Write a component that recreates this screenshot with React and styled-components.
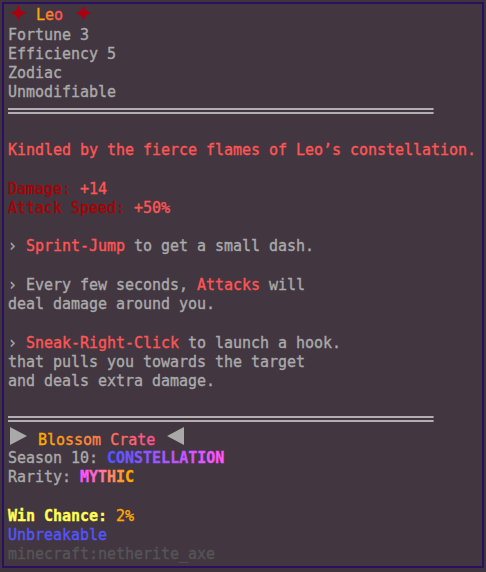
import React from "react";
import styled, { createGlobalStyle } from "styled-components";

const LH = 19.25;

const GlobalStyle = createGlobalStyle`
  html, body {
    margin: 0;
    padding: 0;
    background: #3d343d;
  }
  body {
    font-family: "DejaVu Sans Mono", "Liberation Mono", monospace;
  }
`;

const Tooltip = styled.div`
  box-sizing: border-box;
  margin: 2px;
  width: 482px;
  padding: 2px 4px 2px 4px;
  background: #423741;
  border: 2px solid #2c0f60;
  color: #aaaaaa;
  font-family: "DejaVu Sans Mono", "Liberation Mono", monospace;
  font-size: 15px;
  letter-spacing: -0.03px;
  -webkit-text-stroke: 0.35px currentColor;
`;

const Line = styled.div`
  box-sizing: border-box;
  height: ${LH}px;
  padding-top: 1.4px;
  line-height: ${LH - 1.4}px;
  white-space: pre;
  overflow: visible;
`;

const SepRow = styled.div`
  box-sizing: border-box;
  height: ${LH}px;
  padding-top: 5.8px;
  display: flex;
  flex-direction: column;
  gap: 2px;
`;

const Rule = styled.div`
  width: 425px;
  height: 1.8px;
  background: #b2aeb2;
  border-right: 1px solid #9c7c58;
`;

const Tx = styled.span`
  color: ${(p) => p.$c || "inherit"};
  font-weight: ${(p) => (p.$bold ? 700 : 400)};
`;

const Glyph = styled.svg`
  display: inline-block;
  vertical-align: ${(p) => p.$va ?? 0}px;
  margin-top: -4px;
  margin-left: ${(p) => p.$ml || 0}px;
  margin-right: ${(p) => p.$mr || 0}px;
`;

const hex = (h) => [1, 3, 5].map((i) => parseInt(h.slice(i, i + 2), 16));
const mix = (a, b, t) => {
  const A = hex(a);
  const B = hex(b);
  return `rgb(${A.map((v, i) => Math.round(v + (B[i] - v) * t)).join(",")})`;
};

function Gradient({ text, from, to, bold }) {
  const chars = [...text];
  const n = Math.max(chars.length - 1, 1);
  return (
    <Tx $bold={bold}>
      {chars.map((ch, i) => (
        <span key={i} style={{ color: mix(from, to, i / n) }}>
          {ch}
        </span>
      ))}
    </Tx>
  );
}

const Star = ({ ml, mr }) => (
  <Glyph width="17" height="16" viewBox="0 0 17 16" $ml={ml} $mr={mr} $va={-0.4}>
    <path
      d="M8.5 0 Q9.6 6.8 17 8 Q9.6 9.2 8.5 16 Q7.4 9.2 0 8 Q7.4 6.8 8.5 0Z"
      fill="#aa0010"
    />
  </Glyph>
);

const Triangle = ({ dir, ml, mr }) => (
  <Glyph width="17" height="18" viewBox="0 0 17 18" $ml={ml} $mr={mr} $va={0.4}>
    <path d={dir === "right" ? "M0 0 L17 9 L0 18Z" : "M17 0 L0 9 L17 18Z"} fill="#a9a9a9" />
  </Glyph>
);

const Separator = () => (
  <SepRow>
    <Rule />
    <Rule />
  </SepRow>
);

const RED = "#ff5555";
const DARK_RED = "#aa0000";

export default function App() {
  return (
    <>
      <GlobalStyle />
      <Tooltip>
        <Line>
          <Star ml={2} />
          {" "}
          <Gradient text="Leo" from="#ffaa00" to="#ff5555" />
          {" "}
          <Star ml={3} />
        </Line>
        <Line>Fortune 3</Line>
        <Line>Efficiency 5</Line>
        <Line>Zodiac</Line>
        <Line>Unmodifiable</Line>
        <Separator />
        <Line />
        <Line>
          <Tx $c={RED}>Kindled by the fierce flames of Leo’s constellation.</Tx>
        </Line>
        <Line />
        <Line>
          <Tx $c={DARK_RED}>Damage:</Tx> <Tx $c={RED}>+14</Tx>
        </Line>
        <Line>
          <Tx $c={DARK_RED}>Attack Speed:</Tx> <Tx $c={RED}>+50%</Tx>
        </Line>
        <Line />
        <Line>
          › <Tx $c={RED}>Sprint-Jump</Tx> to get a small dash.
        </Line>
        <Line />
        <Line>
          › Every few seconds, <Tx $c={RED}>Attacks</Tx> will
        </Line>
        <Line>deal damage around you.</Line>
        <Line />
        <Line>
          › <Tx $c={RED}>Sneak-Right-Click</Tx> to launch a hook.
        </Line>
        <Line>that pulls you towards the target</Line>
        <Line>and deals extra damage.</Line>
        <Line />
        <Separator />
        <Line>
          <Triangle dir="right" ml={2} mr={2} />
          {" "}
          <Gradient text="Blossom Crate" from="#ffaa00" to="#ff5590" />
          {" "}
          <Triangle dir="left" ml={3} />
        </Line>
        <Line>
          Season 10: <Gradient text="CONSTELLATION" from="#5555ff" to="#ff55ff" bold />
        </Line>
        <Line>
          Rarity: <Gradient text="MYTHIC" from="#ff55ff" to="#ffaa00" bold />
        </Line>
        <Line />
        <Line>
          <Tx $c="#ffff55" $bold>
            Win Chance:
          </Tx>{" "}
          <Tx $c="#ffaa00">2%</Tx>
        </Line>
        <Line>
          <Tx $c="#5555ff">Unbreakable</Tx>
        </Line>
        <Line>
          <Tx $c="#555555">minecraft:netherite_axe</Tx>
        </Line>
      </Tooltip>
    </>
  );
}
